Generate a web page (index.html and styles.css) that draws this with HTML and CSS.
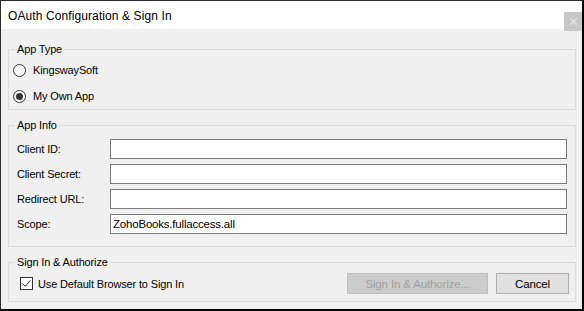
FILE: index.html
```html
<!DOCTYPE html>
<html lang="en">
<head>
    <meta charset="UTF-8">
    <title>OAuth Configuration &amp; Sign In</title>
    <link rel="stylesheet" href="styles.css">
</head>
<body>
    <div class="window">
        <div class="titlebar">
            <span class="title">OAuth Configuration &amp; Sign In</span>
            <span class="close-btn">
                <svg width="7" height="7" viewBox="0 0 7 7"><path d="M0.5 0.5 L6.5 6.5 M6.5 0.5 L0.5 6.5" stroke="#e4e4e4" stroke-width="1.4"/></svg>
            </span>
        </div>

        <div class="content">
            <fieldset class="group">
                <legend>App Type</legend>
                <div class="radio-list">
                    <div class="radio-row">
                        <span class="radio"></span>
                        <span>KingswaySoft</span>
                    </div>
                    <div class="radio-row">
                        <span class="radio checked"></span>
                        <span>My Own App</span>
                    </div>
                </div>
            </fieldset>

            <fieldset class="group">
                <legend>App Info</legend>
                <div class="form-grid">
                    <label>Client ID:</label>
                    <div class="textbox"></div>
                    <label>Client Secret:</label>
                    <div class="textbox"></div>
                    <label>Redirect URL:</label>
                    <div class="textbox"></div>
                    <label>Scope:</label>
                    <div class="textbox">ZohoBooks.fullaccess.all</div>
                </div>
            </fieldset>

            <fieldset class="group">
                <legend>Sign In &amp; Authorize</legend>
                <div class="action-row">
                    <div class="check-row">
                        <span class="checkbox">
                            <svg width="11" height="11" viewBox="0 0 11 11"><path d="M1.5 5.5 L4.2 8.3 L9.5 2.2" fill="none" stroke="#333" stroke-width="1"/></svg>
                        </span>
                        <span>Use Default Browser to Sign In</span>
                    </div>
                    <div class="buttons">
                        <button class="btn btn-disabled" disabled>Sign In &amp; Authorize...</button>
                        <button class="btn">Cancel</button>
                    </div>
                </div>
            </fieldset>
        </div>
    </div>
</body>
</html>
```

FILE: styles.css
```css
body {
    margin: 0;
    padding: 0;
    font-family: 'Liberation Sans', Arial, sans-serif;
    font-size: 11px;
    color: #000;
    background-color: #f0f0f0;
}

.window {
    width: 584px;
    height: 311px;
    box-sizing: border-box;
    border-top: 1px solid #2b2b2b;
    border-left: 1px solid #2b2b2b;
    border-right: 2px solid #000;
    border-bottom: 2px solid #000;
    background-color: #f0f0f0;
    display: flex;
    flex-direction: column;
}

.titlebar {
    height: 28px;
    background-color: #fff;
    display: flex;
    align-items: center;
    justify-content: space-between;
    padding: 0 0 0 7px;
}

.title {
    font-size: 12px;
    letter-spacing: 0.1px;
    margin-top: 1px;
}

.close-btn {
    width: 18px;
    height: 19px;
    margin-top: 12px;
    background-color: #c8c8c8;
    display: flex;
    align-items: center;
    justify-content: center;
}

.content {
    padding: 13px 6px 0 7px;
    letter-spacing: -0.15px;
}

.group {
    margin: 0 0 8px 0;
    padding: 0;
    border: 1px solid #dcdcdc;
    min-width: 0;
}

.group legend {
    margin-left: 6px;
    padding: 0 2px;
    line-height: 14px;
}

.radio-list {
    padding: 1px 0 0 4px;
}

.radio-row {
    height: 26px;
    display: flex;
    align-items: center;
    gap: 7px;
}

.radio {
    width: 13px;
    height: 13px;
    box-sizing: border-box;
    border: 1px solid #333;
    border-radius: 50%;
    background-color: #fff;
    display: flex;
    align-items: center;
    justify-content: center;
}

.radio.checked::after {
    content: "";
    width: 7px;
    height: 7px;
    border-radius: 50%;
    background-color: #333;
}

.form-grid {
    display: grid;
    grid-template-columns: 93px 1fr;
    row-gap: 5px;
    align-items: center;
    padding: 7px 8px 12px 8px;
}

.textbox {
    height: 20px;
    box-sizing: border-box;
    border: 1px solid #7a7a7a;
    background-color: #fff;
    padding: 0 2px;
    line-height: 18px;
    font-size: 11.5px;
    letter-spacing: -0.2px;
}

.action-row {
    display: flex;
    align-items: center;
    justify-content: space-between;
    padding: 4px 6px 7px 11px;
}

.check-row {
    display: flex;
    align-items: center;
    gap: 5px;
}

.checkbox {
    width: 13px;
    height: 13px;
    box-sizing: border-box;
    border: 1px solid #333;
    background-color: #fff;
    display: flex;
    align-items: center;
    justify-content: center;
}

.buttons {
    display: flex;
    gap: 8px;
}

.btn {
    height: 21px;
    width: 73px;
    padding: 0;
    font-family: 'Liberation Sans', Arial, sans-serif;
    font-size: 11.5px;
    letter-spacing: -0.15px;
    color: #000;
    background-color: #e1e1e1;
    border: 1px solid #adadad;
}

.btn-disabled {
    width: 141px;
    color: #a0a0a0;
    background-color: #cccccc;
    border-color: #bfbfbf;
}
```
